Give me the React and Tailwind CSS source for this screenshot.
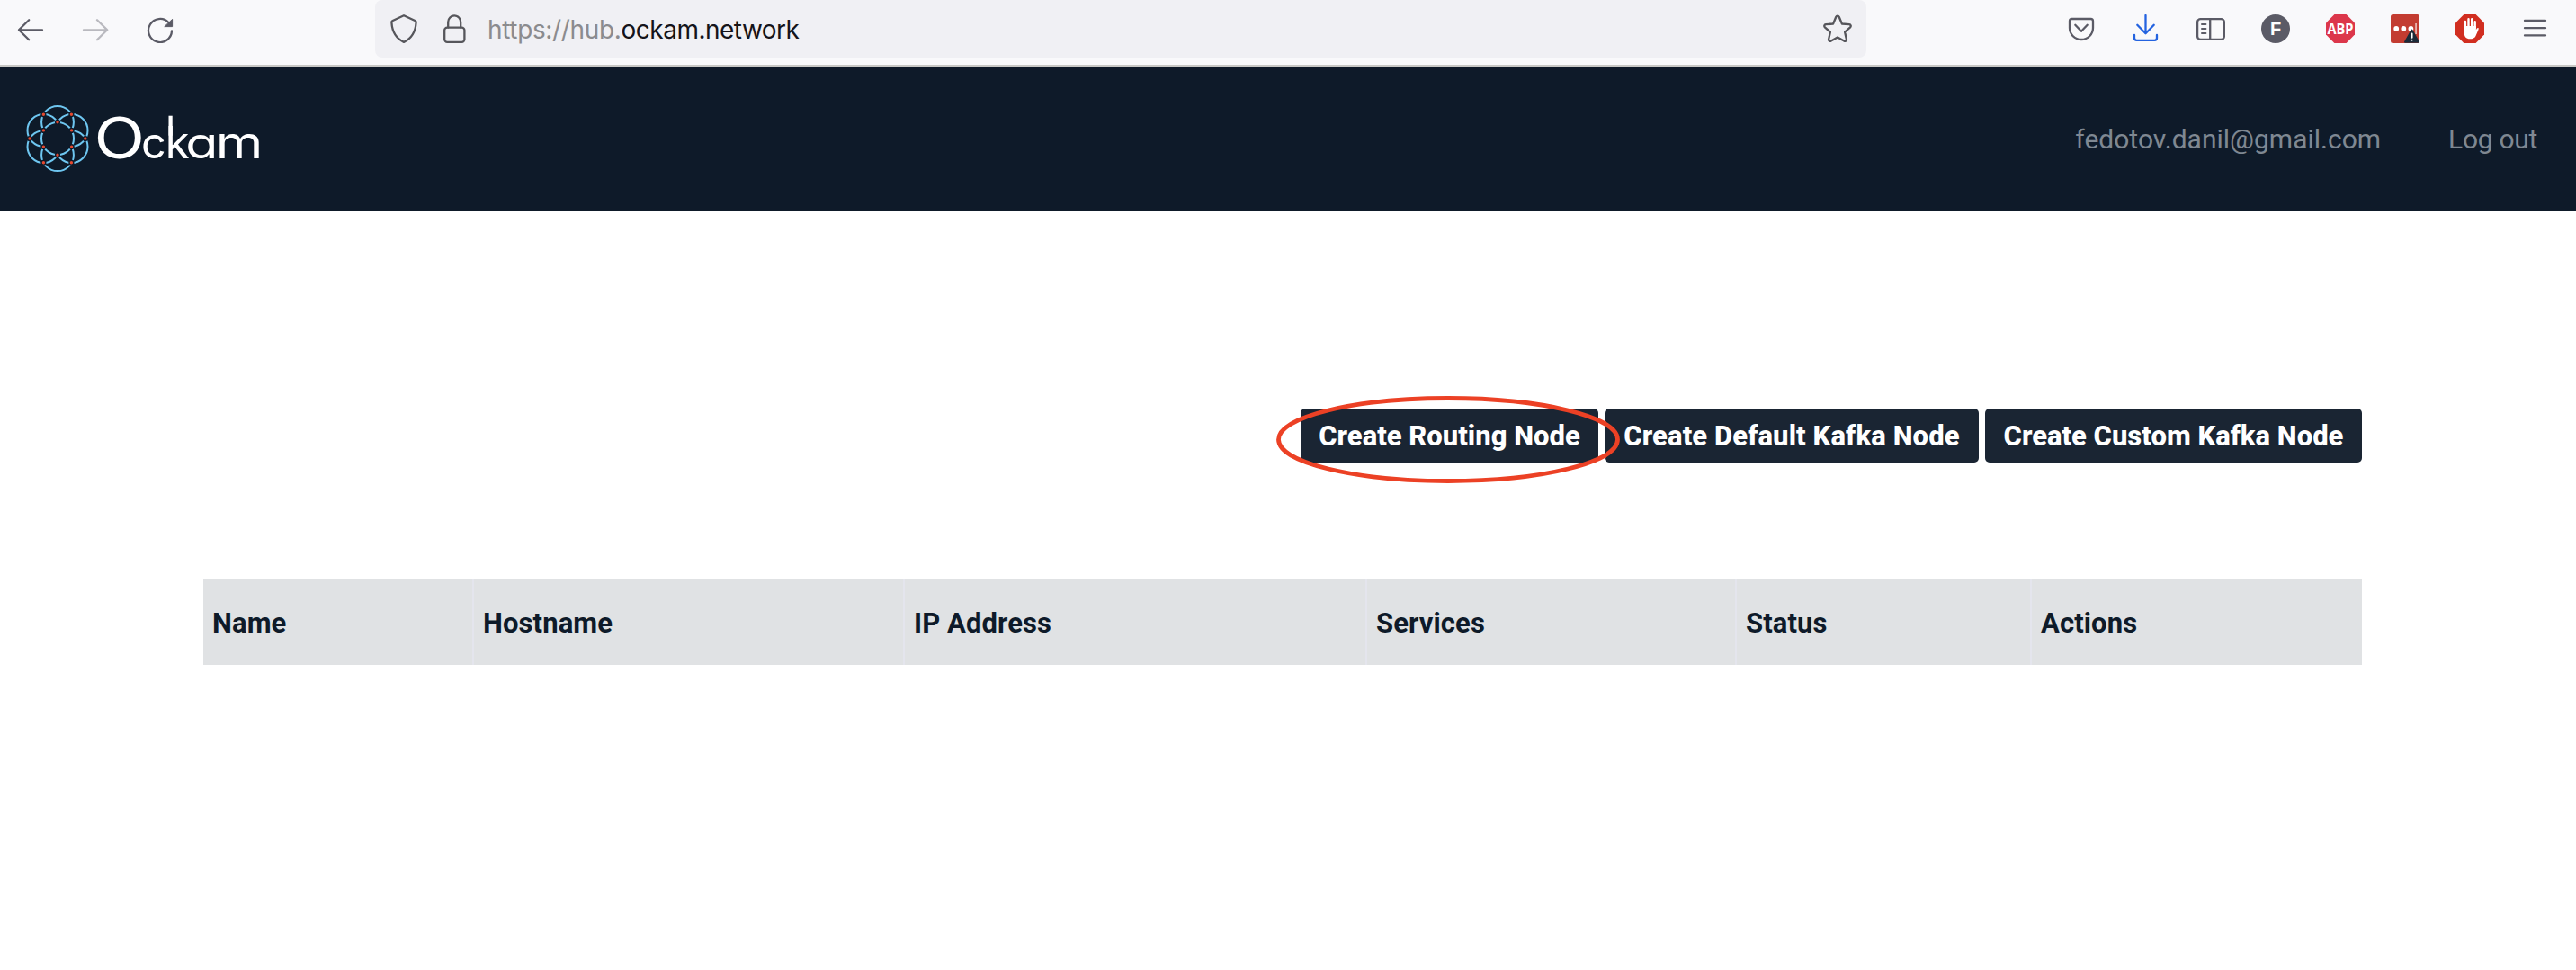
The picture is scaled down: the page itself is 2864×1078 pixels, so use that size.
import React from "react";

const PLEX = "font-['Roboto','Liberation_Sans',sans-serif]";

function Icon({ children, className = "" }) {
  return (
    <svg viewBox="0 0 32 32" fill="none" strokeLinecap="round" strokeLinejoin="round" strokeWidth="2.3" className={`size-8 shrink-0 stroke-[#5b5b66] ${className}`}>
      {children}
    </svg>
  );
}

function Toolbar() {
  return (
    <div className="flex h-[74px] shrink-0 items-start border-b-2 border-[#c8c8c5] bg-[#f9f9fb]">
      <div className="flex w-[417px] shrink-0 gap-10 pt-4 pl-[18px]">
        <Icon><path d="M29 17.3H3M14.2 6.3 3 17.3l11.2 11" /></Icon>
        <Icon className="opacity-40"><path d="M3 17.3h26M18 6.3l11.2 11L18 28.3" /></Icon>
        <Icon>
          <path d="M29 18.3A13 13 0 1 1 25.4 9" />
          <path d="M29.6 5.8v7.8h-8.4z" fill="#5b5b66" strokeWidth="1" />
        </Icon>
      </div>
      <div className="flex h-16 w-[1658px] shrink-0 items-start rounded-lg bg-[#f0f0f4] pt-4 pr-4 pl-4">
        <Icon className="stroke-[#56565b]"><path d="M16 1.2 28.4 7c.9.4 1.3 1 1.2 2C29 19.6 24.5 26.8 16 30.9 7.5 26.8 3 19.6 2.4 9c-.1-1 .3-1.6 1.2-2z" /></Icon>
        <Icon className="ml-6 stroke-[#56565b]">
          <rect x="5.2" y="14.6" width="22.2" height="16.2" rx="3" />
          <path d="M9.2 14.6V8.4a7 7 0 0 1 14 0v6.2" />
        </Icon>
        <div className="ml-[21px] h-8 font-['Inter',sans-serif] text-[28px] leading-[34px] whitespace-nowrap text-[#8b8b8e]">
          <span className="tracking-[-0.35px]">https://hub.</span>
          <span className="tracking-[-0.5px] text-[#15141a]">ockam.network</span>
        </div>
        <Icon className="ml-auto stroke-[#56565b]"><path d="M14.3 2.8c.7-1.5 2.7-1.5 3.4 0l3.2 7.7 8.1.7c1.7.2 2.3 2 1.1 3.2l-6 5.3 1.8 8c.3 1.7-1.3 2.8-2.7 1.9L16 25.4l-7.2 4.2c-1.4.9-3-.2-2.7-1.9l1.8-8-6-5.3c-1.2-1.2-.6-3 1.1-3.2l8.1-.7z" /></Icon>
      </div>
      <div className="flex flex-1 justify-end gap-10 pt-4 pr-[30px]">
        <Icon>
          <path d="M5.5 5h21c1.6 0 2.5.9 2.5 2.5V15a13 13 0 0 1-26 0V7.5C3 5.9 3.9 5 5.5 5z" />
          <path d="m9.3 11.8 6.7 7 6.7-7" />
        </Icon>
        <Icon className="stroke-[#2463e0]">
          <path d="M15.5 1v20M6.3 11.8l9.2 9.4 9.2-9.4M3 23v3.2c0 1.8.8 2.6 2.6 2.6h19.8c1.8 0 2.6-.8 2.6-2.6V23" />
        </Icon>
        <Icon>
          <rect x="1.1" y="5.1" width="29.8" height="22.8" rx="3.5" />
          <path d="M15.2 5.1v22.8" />
          <path d="M6 11h4.4M6 16h4.4M6 21h4.4" strokeWidth="2" />
        </Icon>
        <Icon className="stroke-none">
          <circle cx="16" cy="16" r="16" fill="#5b5b66" />
          <text x="16.2" y="23" textAnchor="middle" fontFamily="Liberation Sans" fontWeight="700" fontSize="20" fill="#fff">F</text>
        </Icon>
        <Icon className="stroke-none">
          <path d="M9.4 0h13.2L32 9.4v13.2L22.6 32H9.4L0 22.6V9.4z" fill="#dc374b" />
          <text x="16" y="22" textLength="29" lengthAdjust="spacingAndGlyphs" textAnchor="middle" fontFamily="Open Sans" fontWeight="700" fontSize="16" fill="#fff">ABP</text>
        </Icon>
        <Icon className="stroke-none">
          <rect width="32" height="32" rx="2.5" fill="#c33c31" />
          <g fill="#fff">
            <circle cx="6.2" cy="16" r="2.9" />
            <circle cx="14.3" cy="16" r="2.9" />
            <circle cx="22.4" cy="16" r="2.9" />
            <rect x="27.5" y="10" width="1.1" height="12" />
          </g>
          <path d="M23.5 17.5 31 30.8H16z" fill="#1c2b39" stroke="#1c2b39" strokeWidth="2" />
          <path d="M23.6 21.5v4.3M23.6 28.7v.1" stroke="#fff" strokeWidth="1.9" />
        </Icon>
        <Icon className="stroke-none">
          <path d="M9.4 0h13.2L32 9.4v13.2L22.6 32H9.4L0 22.6V9.4z" fill="#d12e20" />
          <path d="M10.9 15V8M14.5 14V5.3M18.2 14V5.3M21.7 15V8.2" stroke="#fff" strokeWidth="2.4" />
          <path d="M9.7 13h13.2v4.2c.8-1.4 1.3-2.3 2.2-2.2.9.1.7 1.2.3 2.2l-3 7c-1.2 2.2-3.2 3.1-6.3 3.1-4.3 0-6.4-2.7-6.4-6.8z" fill="#fff" />
        </Icon>
        <Icon><path d="M5 7h23M5 15.2h23M5 23.4h23" /></Icon>
      </div>
    </div>
  );
}

const PETALS = [[64, 135.8], [79.6, 144.9], [79.6, 163.1], [64, 172.2], [48.4, 163.1], [48.4, 144.9]];
const OUTER = [[48.4, 127.3], [79.4, 127.3], [94.8, 154], [79.4, 180.7], [48.4, 180.7], [33, 154]];

function Logo() {
  return (
    <svg viewBox="0 74 320 160" className="h-40 w-80">
      <g fill="none" stroke="#6ec6f0" strokeWidth="2">
        {PETALS.map(([x, y]) => <circle key={`${x}-${y}`} cx={x} cy={y} r="17.9" />)}
        <circle cx="64" cy="154" r="18" fill="#0e1a29" />
      </g>
      <g fill="#e5492f" stroke="#0e1a29" strokeWidth="1.4">
        {[...PETALS, ...OUTER].map(([x, y]) => <circle key={`${x}-${y}`} cx={x} cy={y} r="2.4" />)}
      </g>
      <g fill="#fff" fontFamily="Inter" fontSize="100" style={{ fontFeatureSettings: '"cv11"' }}>
        <text transform="translate(105.8 175.5) scale(.675 .643)" fontFamily="Lato">O</text>
        <text transform="translate(157 175.5) scale(.484 .48)">c</text>
        <text transform="translate(183.8 175.7) scale(.49)">k</text>
        <text transform="translate(206.2 175.5) scale(.59 .48)">a</text>
        <text transform="translate(239.7 175.7) scale(.6 .485)">m</text>
        <rect x="187.5" y="128.7" width="4.2" height="22" />
      </g>
    </svg>
  );
}

function Header() {
  return (
    <header className={`flex h-40 shrink-0 items-center justify-between bg-[#0e1a29] pr-[43px] ${PLEX}`}>
      <Logo />
      <nav className="flex gap-[75px] pt-[2px] text-[30px] leading-10 whitespace-nowrap text-[#7f8892]">
        <a>fedotov.danil@gmail.com</a>
        <a className="tracking-[-0.3px]">Log out</a>
      </nav>
    </header>
  );
}

function Button({ children, className }) {
  return (
    <button className={`flex h-[60px] items-center justify-center rounded-[5px] bg-[#1a2533] pt-[2px] text-[31px] font-extrabold whitespace-nowrap text-white ${className}`}>
      {children}
    </button>
  );
}

const COLUMNS = ["Name", "Hostname", "IP Address", "Services", "Status", "Actions"];

export default function App() {
  return (
    <div className="flex h-[1078px] w-[2864px] flex-col overflow-hidden bg-white">
      <Toolbar />
      <Header />
      <main className={`ml-[226px] w-[2400px] pt-[220px] ${PLEX}`}>
        <div className="relative flex justify-end gap-[7px]">
          <Button className="w-[331px]">Create Routing Node</Button>
          <Button className="w-[416px] tracking-[0.1px]">Create Default Kafka Node</Button>
          <Button className="w-[419px]">Create Custom Kafka Node</Button>
          <svg viewBox="0 0 384 100" className="absolute top-[-15px] left-[1192px] h-[100px] w-96">
            <ellipse cx="192" cy="49.5" rx="188.5" ry="46" fill="none" stroke="#ec4125" strokeWidth="4.8" />
          </svg>
        </div>
        <div className="mt-[130px] grid h-[95px] grid-cols-[299px_479px_514px_411px_328px_369px] bg-[#e0e2e4] text-[31px] font-bold tracking-[0.1px] text-[#0e1a29]">
          {COLUMNS.map((c, i) => (
            <div key={c} className={i === 0 ? "flex items-center pt-[3px] pl-[10px]" : "flex items-center border-l-2 border-[#e4e5ed] pt-[3px] pl-[10px]"}>
              {c}
            </div>
          ))}
        </div>
      </main>
    </div>
  );
}
